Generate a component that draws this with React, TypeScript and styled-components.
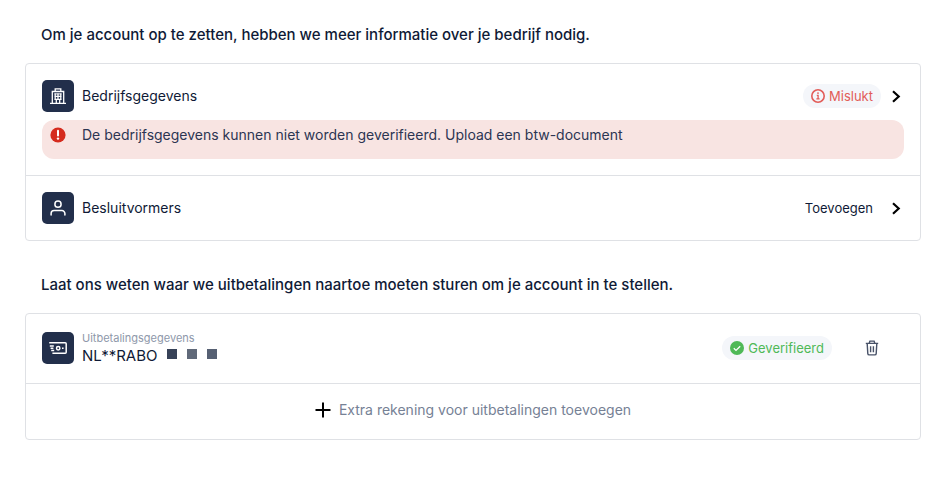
import React from "react";
import styled, { createGlobalStyle } from "styled-components";

const GlobalStyle = createGlobalStyle`
  *, *::before, *::after { box-sizing: border-box; }
  body {
    margin: 0;
    background: #ffffff;
    color: #0f1a36;
    font-family: Inter, "Liberation Sans", sans-serif;
    font-size: 14px;
    line-height: 20px;
  }
  button { font: inherit; color: inherit; background: none; border: 0; padding: 0; cursor: pointer; }
`;

const Page = styled.main`
  display: flex;
  flex-direction: column;
  gap: 34px;
  padding: 25px 23px 25px 25px;
`;

const Section = styled.section`
  display: flex;
  flex-direction: column;
  gap: 18px;
`;

const Heading = styled.h2`
  margin: 0;
  padding: 0 16px;
  font-size: 15px;
  line-height: 20px;
  font-weight: 500;
`;

const Card = styled.div`
  border: 1px solid #dfe1e5;
  border-radius: 4px;
`;

const Row = styled.div`
  padding: 16px;
  & + & { border-top: 1px solid #dfe1e5; }
`;

const RowLine = styled.div`
  display: flex;
  align-items: center;
  gap: 8px;
`;

const PayoutLine = styled(RowLine)`
  padding-bottom: 1px;
`;

const IconTile = styled.span`
  display: flex;
  align-items: center;
  justify-content: center;
  flex: none;
  width: 32px;
  height: 32px;
  border-radius: 5px;
  background: #222f4b;
  color: #ffffff;
`;

const RowTitle = styled.span`
  flex: 1;
`;

const ActionButton = styled.button`
  display: flex;
  align-items: center;
  gap: 9px;
  padding-right: 2px;
  font-size: 13px;
`;

const ActionText = styled.span`
  padding-right: 8px;
`;

const Badge = styled.span<{ $tone: string }>`
  display: flex;
  align-items: center;
  gap: 4px;
  height: 24px;
  padding: 0 8px;
  border-radius: 12px;
  background: #f4f6fa;
  font-size: 13px;
  color: ${(p) => p.$tone};
`;

const Alert = styled.div`
  display: flex;
  align-items: flex-start;
  gap: 16px;
  margin-top: 8px;
  padding: 5px 8px 14px;
  border-radius: 12px;
  background: #f8e4e2;
  color: #2c3552;
`;

const AlertIcon = styled.span`
  display: flex;
  align-items: center;
  height: 20px;
`;

const AlertText = styled.p`
  margin: 0;
`;

const Payout = styled.div`
  flex: 1;
  display: flex;
  flex-direction: column;
`;

const PayoutLabel = styled.span`
  font-size: 11px;
  line-height: 16px;
  color: #8e98aa;
`;

const PayoutAccount = styled.span`
  display: flex;
  align-items: center;
  gap: 9px;
  font-size: 15px;
`;

const Mask = styled.span`
  display: flex;
  gap: 10px;
  padding-bottom: 4px;
`;

const MaskBlock = styled.span<{ $tone: string }>`
  width: 10px;
  height: 10px;
  background: ${(p) => p.$tone};
`;

const DeleteButton = styled.button`
  display: flex;
  align-items: center;
  justify-content: center;
  width: 32px;
  height: 32px;
  margin: 0 16px;
  color: #485268;
`;

const AddButton = styled.button`
  display: flex;
  align-items: center;
  justify-content: center;
  gap: 8px;
  width: 100%;
  height: 23px;
  padding-bottom: 3px;
  color: #768195;
`;

const ChevronIcon = () => (
  <svg width="12" height="14" viewBox="0 0 12 14" fill="none" stroke="#000" strokeWidth="2.2" aria-hidden="true">
    <path d="M3 2.3 8.7 7.5 3 12.7" />
  </svg>
);

const BuildingIcon = () => (
  <svg width="18" height="18" viewBox="0 0 18 18" fill="none" stroke="currentColor" strokeWidth="1.3" aria-hidden="true">
    <path d="M1 16.3h16M3.3 16V4.5h11.4V16M6.2 4.3V1.8h5.6v2.5M6.2 6.5v6M9 6.5v6M11.8 6.5v6M5.4 9.4h7.2M5.4 12.3h7.2M7.3 16v-3.5M10.7 16v-3.5" />
    <path d="M5.4 6.9h7.2" strokeWidth="1" />
  </svg>
);

const PersonIcon = () => (
  <svg width="18" height="18" viewBox="0 0 18 18" fill="none" stroke="currentColor" strokeWidth="1.5" strokeLinecap="round" aria-hidden="true">
    <circle cx="9" cy="5.2" r="3.1" />
    <path d="M2.1 16v-1.4a3 3 0 0 1 3-3h7.8a3 3 0 0 1 3 3V16" />
  </svg>
);

const PayoutIcon = () => (
  <svg width="20" height="16" viewBox="0 0 20 16" fill="none" stroke="currentColor" strokeWidth="1.5" aria-hidden="true">
    <path d="M1.2 2.7h16a1 1 0 0 1 1 1v8.6a1 1 0 0 1-1 1H4.4M1.8 6h4M2.6 8.2h2.8M3.2 10.4h3" />
    <circle cx="10.2" cy="8.2" r="1.7" />
    <path d="M14 8.2h1.6" />
  </svg>
);

const AlertCircleIcon = () => (
  <svg width="16" height="16" viewBox="0 0 16 16" aria-hidden="true">
    <circle cx="8" cy="8" r="7.6" fill="#d52b1e" />
    <path d="M8 3.8v4.6" stroke="#fff" strokeWidth="2" strokeLinecap="round" />
    <circle cx="8" cy="11.6" r="1.2" fill="#fff" />
  </svg>
);

const InfoIcon = () => (
  <svg width="14" height="14" viewBox="0 0 14 14" fill="none" stroke="currentColor" strokeWidth="1.6" aria-hidden="true">
    <circle cx="7" cy="7" r="6.2" />
    <path d="M5.8 6.3h1.3v3.4M5.4 9.9h3.2" strokeWidth="1.3" />
    <circle cx="7" cy="4.1" r=".9" fill="currentColor" stroke="none" />
  </svg>
);

const CheckIcon = () => (
  <svg width="14" height="14" viewBox="0 0 14 14" fill="none" aria-hidden="true">
    <circle cx="7" cy="7" r="7" fill="#4fb957" />
    <path d="m3.8 7.3 2.2 2.1 4.2-4.2" stroke="#fff" strokeWidth="1.3" />
  </svg>
);

const TrashIcon = () => (
  <svg width="14" height="16" viewBox="0 0 14 16" fill="none" stroke="currentColor" strokeWidth="1.4" aria-hidden="true">
    <path d="M.8 3.4h12.4M4.2 3.2l.7-2.1h4.2l.7 2.1M2.2 3.6l.6 10a1.4 1.4 0 0 0 1.4 1.3h5.6a1.4 1.4 0 0 0 1.4-1.3l.6-10M5.6 6.2v6M8.4 6.2v6" />
  </svg>
);

const PlusIcon = () => (
  <svg width="16" height="16" viewBox="0 0 16 16" stroke="#000" strokeWidth="2" aria-hidden="true">
    <path d="M8 .5v15M.5 8h15" />
  </svg>
);

const maskTones = ["#374258", "#606979", "#566073"];

export default function App() {
  return (
    <>
      <GlobalStyle />
      <Page>
        <Section>
          <Heading>Om je account op te zetten, hebben we meer informatie over je bedrijf nodig.</Heading>
          <Card>
            <Row>
              <RowLine>
                <IconTile><BuildingIcon /></IconTile>
                <RowTitle>Bedrijfsgegevens</RowTitle>
                <ActionButton type="button">
                  <Badge $tone="#e25c58"><InfoIcon />Mislukt</Badge>
                  <ChevronIcon />
                </ActionButton>
              </RowLine>
              <Alert role="alert">
                <AlertIcon><AlertCircleIcon /></AlertIcon>
                <AlertText>De bedrijfsgegevens kunnen niet worden geverifieerd. Upload een btw-document</AlertText>
              </Alert>
            </Row>
            <Row>
              <RowLine>
                <IconTile><PersonIcon /></IconTile>
                <RowTitle>Besluitvormers</RowTitle>
                <ActionButton type="button">
                  <ActionText>Toevoegen</ActionText>
                  <ChevronIcon />
                </ActionButton>
              </RowLine>
            </Row>
          </Card>
        </Section>
        <Section>
          <Heading>Laat ons weten waar we uitbetalingen naartoe moeten sturen om je account in te stellen.</Heading>
          <Card>
            <Row>
              <PayoutLine>
                <IconTile><PayoutIcon /></IconTile>
                <Payout>
                  <PayoutLabel>Uitbetalingsgegevens</PayoutLabel>
                  <PayoutAccount>
                    NL**RABO
                    <Mask aria-hidden="true">
                      {maskTones.map((tone) => <MaskBlock key={tone} $tone={tone} />)}
                    </Mask>
                  </PayoutAccount>
                </Payout>
                <Badge $tone="#4fb957"><CheckIcon />Geverifieerd</Badge>
                <DeleteButton type="button" aria-label="Verwijderen"><TrashIcon /></DeleteButton>
              </PayoutLine>
            </Row>
            <Row>
              <AddButton type="button"><PlusIcon />Extra rekening voor uitbetalingen toevoegen</AddButton>
            </Row>
          </Card>
        </Section>
      </Page>
    </>
  );
}
